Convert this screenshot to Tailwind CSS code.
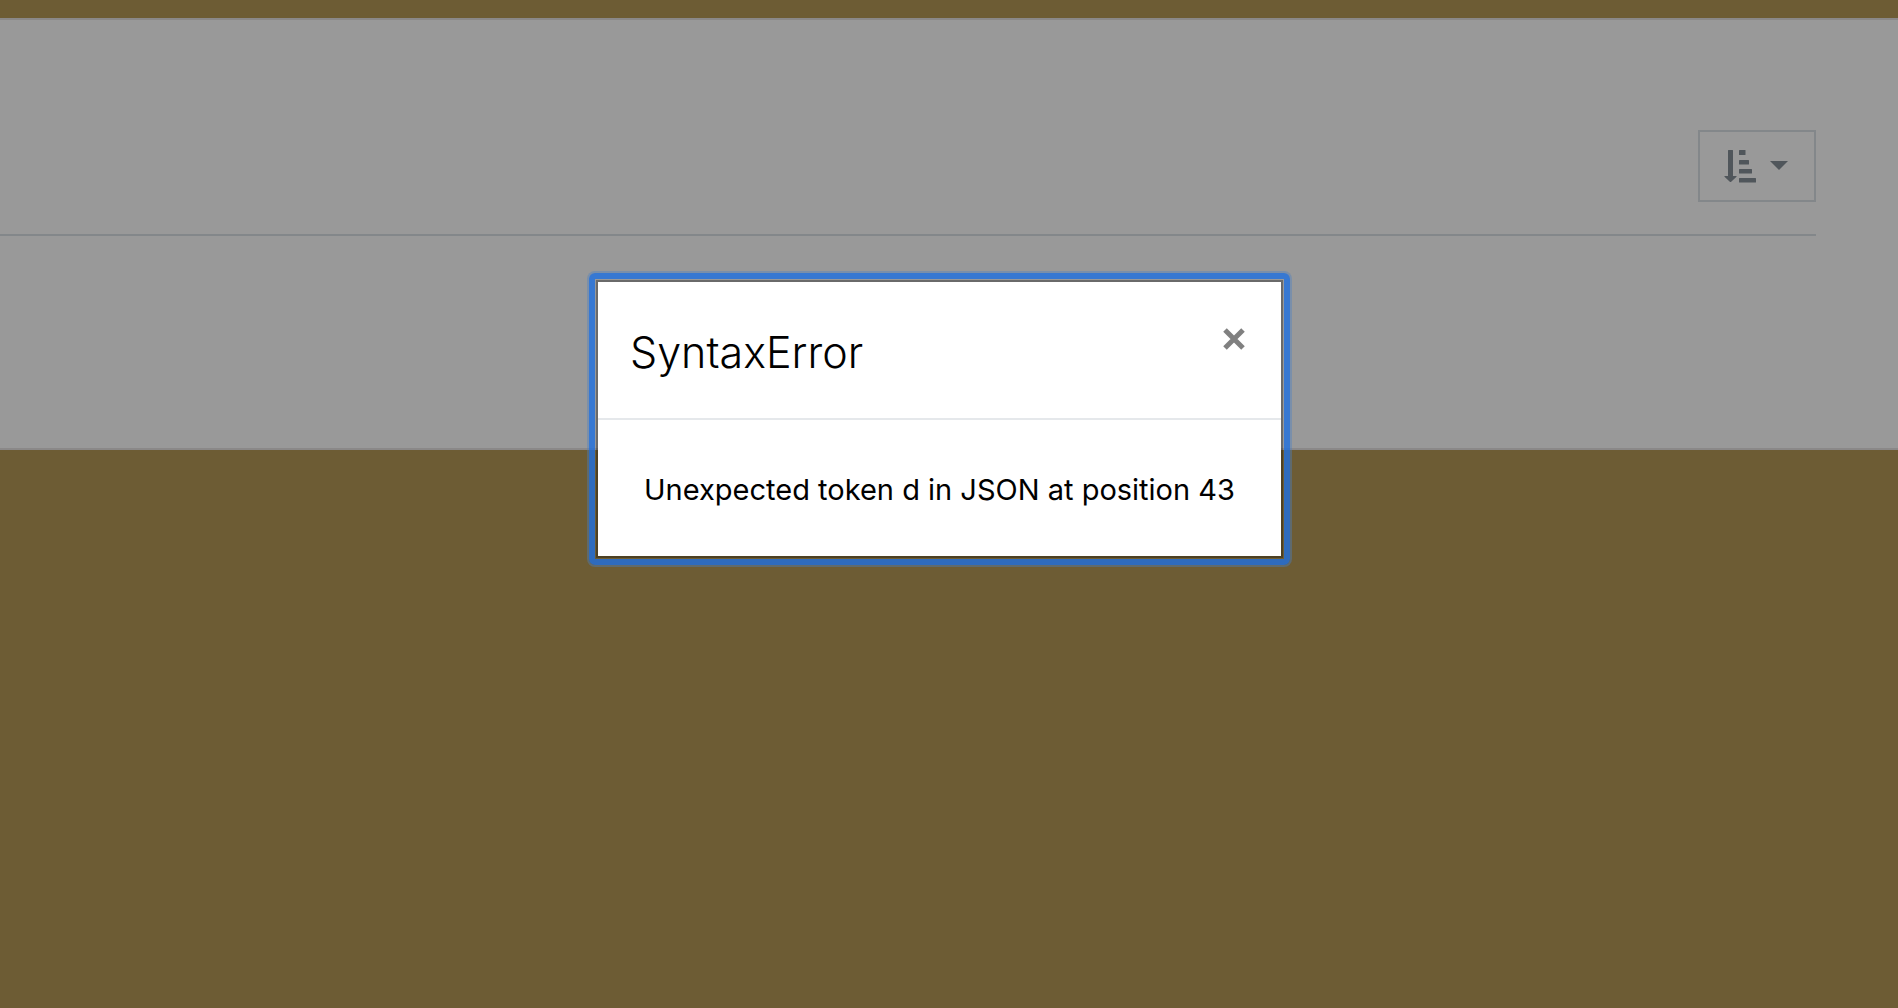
<!DOCTYPE html>
<html lang="en">
<head>
  <meta charset="UTF-8" />
  <meta name="viewport" content="width=device-width, initial-scale=1" />
  <title>SyntaxError</title>
  <script src="https://cdn.jsdelivr.net/npm/@tailwindcss/browser@4"></script>
</head>

<body class="bg-[#6d5c34] min-h-screen overflow-hidden font-['Inter',sans-serif] text-black">

  <!-- Page behind the dialog -->
  <main class="pt-[18px]">
    <section class="bg-[#999999] border-y-2 border-[#8a8888] pt-[110px] pb-[212px] pr-[82px]">
      <div class="flex justify-end pb-8 border-b-2 border-[#83878a]">
        <button type="button" aria-label="Sort" class="flex items-center gap-[14px] w-[118px] h-[72px] pl-6 border-2 border-[#83878a] text-[#50565b]">
          <svg class="w-8 h-[34px]" viewBox="0 0 32 34" fill="currentColor" aria-hidden="true">
            <path d="M4 1.5q0-.5.5-.5h4q.5 0 .5.5V27h3.2q.8 0 .3.7l-5.3 5.1q-.7.5-1.4 0L.5 27.7q-.5-.7.3-.7H4z" />
            <rect x="15" y="1" width="6.5" height="5" rx=".5" />
            <rect x="15" y="11" width="10" height="4.500" rx=".5" />
            <rect x="15" y="20" width="13" height="4.500" rx=".5" />
            <rect x="15" y="29" width="17" height="4.500" rx=".5" />
          </svg>
          <svg class="w-[18px] h-[10px]" viewBox="0 0 18 10" fill="currentColor" aria-hidden="true">
            <path d="M0 0h18L9 9z" />
          </svg>
        </button>
      </div>
    </section>
  </main>

  <!-- Dialog -->
  <div class="fixed inset-0 flex justify-center items-start pt-[280px] pr-[19px]">
    <div role="dialog" aria-modal="true" aria-labelledby="dialogTitle" class="relative bg-white bg-clip-padding border-2 border-black/30">
      <!-- Focus ring -->
      <div class="absolute -inset-[9px] rounded-md border-[6px] border-[#1e6fe0]/80 ring-2 ring-[#4a7fc4]/40 pointer-events-none"></div>

      <div class="flex items-start justify-between h-[138px] px-8 pt-10 border-b-2 border-[#e5e8eb]">
        <h5 id="dialogTitle" class="text-[43px] leading-[60px] font-light">SyntaxError</h5>
        <button type="button" aria-label="Close" class="p-1 pt-[6px] text-[#808080]">
          <svg class="w-[22px] h-[22px]" viewBox="0 0 22 22" fill="none" stroke="currentColor" stroke-width="5" aria-hidden="true">
            <path d="M2 2l18 18M20 2L2 20" />
          </svg>
        </button>
      </div>
      <div class="px-[46px] pt-[50px] pb-[46px]">
        <p class="text-[29px] leading-10">Unexpected token d in JSON at position 43</p>
      </div>
    </div>
  </div>

</body>
</html>
